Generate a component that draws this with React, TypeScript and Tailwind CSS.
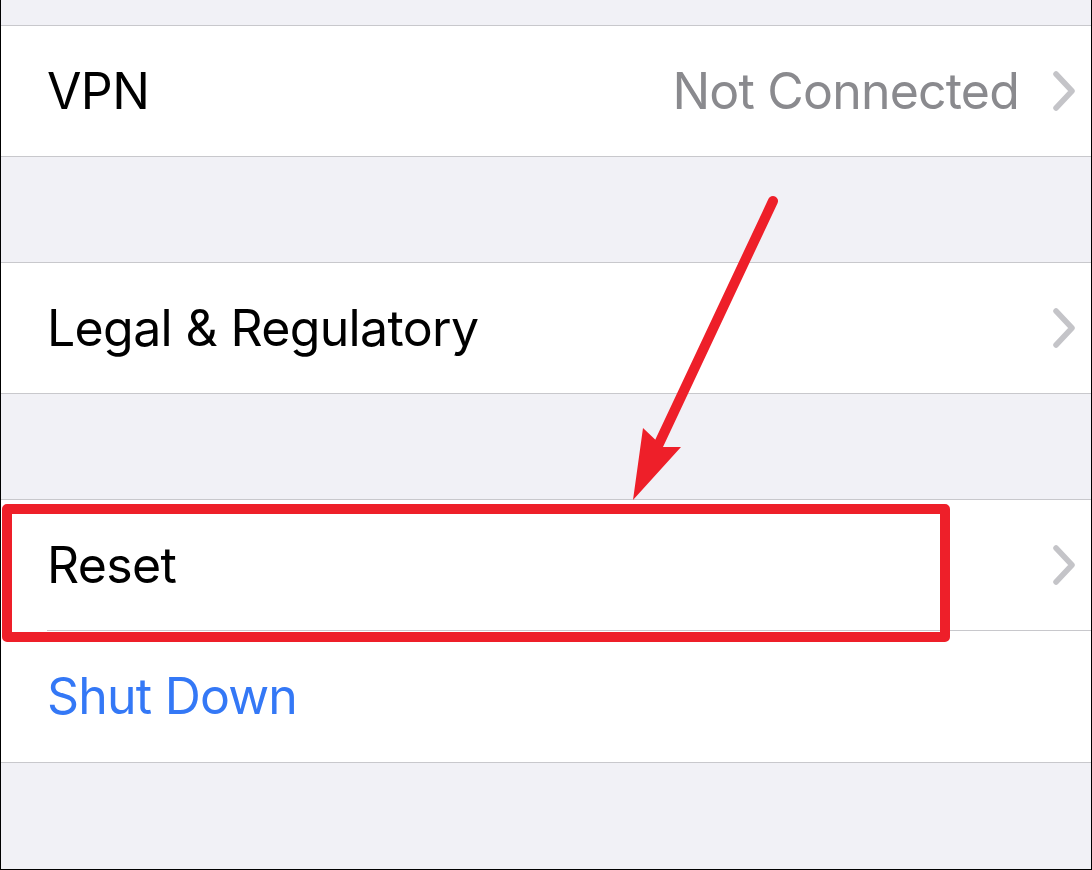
import React from "react";

const Chevron = () => (
  <svg width="22" height="40" viewBox="0 0 22 40" className="shrink-0">
    <path d="M3 3 L19 20 L3 37" fill="none" stroke="#c4c4c8" strokeWidth="5.5" strokeLinecap="round" strokeLinejoin="round" />
  </svg>
);

const Row = ({ label, value, chevron = true, blue = false }: { label: string; value?: string; chevron?: boolean; blue?: boolean }) => (
  <div className="flex h-[130px] items-center bg-white pl-[46px] pr-[16px]">
    <span className={`flex-1 text-[50px] tracking-[-0.65px] ${blue ? "text-[#3478f6]" : "text-black"}`}>{label}</span>
    {value && <span className="mr-[34px] text-[50px] tracking-[-0.8px] text-[#8a8a8e]">{value}</span>}
    {chevron && <Chevron />}
  </div>
);

export default function App() {
  return (
    <div
      className="relative h-[870px] w-[1092px] overflow-hidden border-b border-l border-r border-black bg-[#f1f1f6]"
      style={{ fontFamily: "Inter, 'Noto Sans', sans-serif" }}
    >
      <div className="h-[25px]" />
      <div className="border-y border-[#c8c8cc]">
        <Row label="VPN" value="Not Connected" />
      </div>
      <div className="h-[105px]" />
      <div className="border-y border-[#c8c8cc]">
        <Row label="Legal & Regulatory" />
      </div>
      <div className="h-[105px]" />
      <div className="border-y border-[#c8c8cc] bg-white">
        <Row label="Reset" />
        <div className="ml-[46px] h-px bg-[#c8c8cc]" />
        <div className="flex h-[131px] items-center bg-white pl-[46px]">
          <span className="text-[50px] tracking-[-0.8px] text-[#3478f6]">Shut Down</span>
        </div>
      </div>

      <div className="absolute left-[1px] top-[504px] h-[138px] w-[948px] rounded-[5px] border-[10px] border-[#ee1f29]" />

      <svg className="absolute left-0 top-0" width="1092" height="870" viewBox="0 0 1092 870">
        <line x1="772" y1="201" x2="655" y2="450" stroke="#ee1f29" strokeWidth="10" strokeLinecap="round" />
        <polygon points="632,500 642,428 662,447 680,447" fill="#ee1f29" />
      </svg>
    </div>
  );
}
